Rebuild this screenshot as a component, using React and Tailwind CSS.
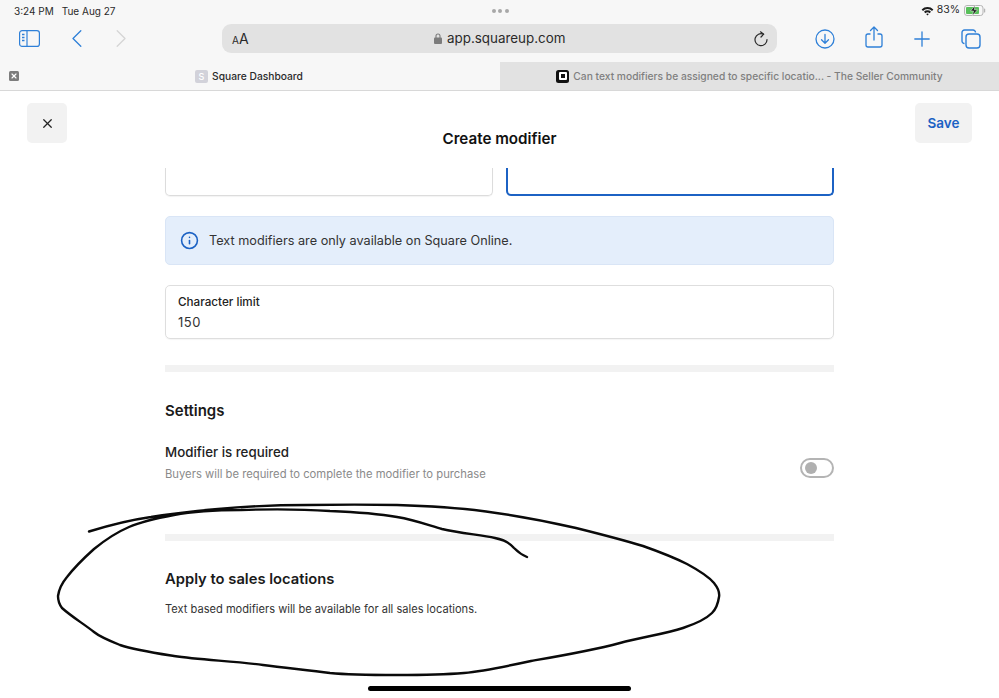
import { X, Info } from 'lucide-react';

const inkPath =
  'M89 531.5 C110 525 130 520 151 517 C175 513 195 511 218 509 C250 506 280 505 308 505 C340 504.5 370 504.5 397 505 C430 506 460 508 486 511.5 C520 516 550 522 576 528 C600 534 620 539 643 546 C660 552 675 558 687 564 C700 571 709 577 714 583 C718 588 720 592 719 597 C718 604 716 609 712 613 C705 620 695 624 683 628 C665 634 642 637 620 643 C590 651 560 656 531 661 C508 666 485 671 464 673 C440 675 420 675 397 675 C375 675 350 675 330 673 C308 670 285 668 263 665 C235 661 200 660 174 656 C155 653 135 650 120 645 C110 641 100 637 94 632 C84 624 72 617 62 608 C59 604 58 600 58 596 C59 589 62 583 67 577 C74 568 84 558 94 549 C105 540 115 533 129 527 C143 521 158 518 174 515 C195 511 218 510 241 510 C270 509 300 509 330 511 C355 512 380 514 397 517 C415 520 428 525 442 529 C460 533 480 535 495 538 C505 540 510 543 514 548 C518 552 522 555 527 557';

function StatusBar() {
  return (
    <div className="flex h-[20px] items-center justify-between pl-[14px] pr-[13px] pt-[1px] text-[10px] leading-none text-[#2a2a2a]">
      <div className="flex w-[200px] gap-[8px]">
        <span>3:24 PM</span>
        <span>Tue Aug 27</span>
      </div>
      <div className="flex gap-[2.5px]">
        <span className="h-[4px] w-[4px] rounded-full bg-[#a8a8a8]" />
        <span className="h-[4px] w-[4px] rounded-full bg-[#a8a8a8]" />
        <span className="h-[4px] w-[4px] rounded-full bg-[#a8a8a8]" />
      </div>
      <div className="flex w-[200px] items-center justify-end gap-[3px] text-[10.5px]">
        <svg width="13" height="10" viewBox="0 0 13 10" className="text-[#1c1c1c]">
          <path d="M0.6 3.4 A8.5 8.5 0 0 1 12.4 3.4 L11 4.9 A6.5 6.5 0 0 0 2 4.9 Z" fill="currentColor" />
          <path d="M3 5.8 A5 5 0 0 1 10 5.8 L8.6 7.2 A3 3 0 0 0 4.4 7.2 Z" fill="currentColor" />
          <path d="M5.2 8 A2 2 0 0 1 7.8 8 L6.5 9.6 Z" fill="currentColor" />
        </svg>
        <span>83%</span>
        <svg width="22" height="11" viewBox="0 0 22 11" className="ml-[1px]">
          <rect x="0.5" y="0.5" width="18.5" height="10" rx="2.5" fill="none" stroke="#b5b5b5" />
          <rect x="2" y="2" width="13" height="7" rx="1" fill="#58c05a" />
          <rect x="20" y="3.5" width="1.2" height="4" rx="0.6" fill="#b5b5b5" />
          <path d="M11 0.5 L6.5 6 H9.5 L8.5 10.5 L13.5 4.8 H10.4 Z" fill="#1c1c1c" stroke="#f7f7f7" strokeWidth="0.5" />
        </svg>
      </div>
    </div>
  );
}

function Toolbar() {
  return (
    <div className="mt-[4px] flex h-[29px] items-center text-[#2f80d8]">
      <div className="flex w-[222px] items-center pl-[19px]">
        <svg width="21" height="17" viewBox="0 0 21 17" fill="none" stroke="currentColor" strokeWidth="1.2">
          <rect x="0.6" y="0.6" width="19.8" height="15.8" rx="2.5" />
          <path d="M8 0.6 V16.4" />
          <path d="M3 4.5 H5.5 M3 7.5 H5.5 M3 10.5 H5.5" strokeWidth="1.4" />
        </svg>
        <svg width="10" height="17" viewBox="0 0 10 17" fill="none" stroke="currentColor" strokeWidth="1.3" strokeLinecap="round" strokeLinejoin="round" className="ml-[32px]">
          <path d="M8.8 0.8 L1 8.5 L8.8 16.2" />
        </svg>
        <svg width="10" height="17" viewBox="0 0 10 17" fill="none" stroke="#d5d5d5" strokeWidth="1.3" strokeLinecap="round" strokeLinejoin="round" className="ml-[34px]">
          <path d="M1.2 0.8 L9 8.5 L1.2 16.2" />
        </svg>
      </div>
      <div className="relative flex h-[29px] w-[555px] items-center justify-between rounded-[9px] bg-[#e2e2e2] pl-[10px] pr-[9px] text-[#2a2a2a]">
        <span className="flex items-baseline text-[14px] leading-none">
          <span className="text-[10px]">A</span>A
        </span>
        <span className="absolute left-[212px] flex items-center gap-[5px] text-[13.4px] leading-none">
          <svg width="8" height="11" viewBox="0 0 8 11" fill="none">
            <path d="M2 5 V3 A2 2 0 0 1 6 3 V5" stroke="#7c7c7c" strokeWidth="1.1" />
            <rect x="0" y="4.5" width="8" height="6.5" rx="1" fill="#7c7c7c" />
          </svg>
          app.squareup.com
        </span>
        <svg width="14" height="16" viewBox="0 0 14 16" fill="none" stroke="currentColor" strokeWidth="1.2">
          <path d="M9.5 3.2 A6 6 0 1 0 13 8.5" strokeLinecap="round" />
          <path d="M6.5 0.8 L9.7 3.2 L7 6" strokeLinecap="round" strokeLinejoin="round" />
        </svg>
      </div>
      <div className="flex flex-1 items-center pl-[38px]">
        <svg width="20" height="20" viewBox="0 0 20 20" fill="none" stroke="currentColor" strokeWidth="1.3">
          <circle cx="10" cy="10" r="9" />
          <path d="M10 5.5 V14 M6.5 10.7 L10 14.2 L13.5 10.7" strokeLinecap="round" strokeLinejoin="round" />
        </svg>
        <svg width="18" height="22" viewBox="0 0 18 22" fill="none" stroke="currentColor" strokeWidth="1.3" className="ml-[30px] -mt-[3px]">
          <path d="M5.5 8 H3 A2 2 0 0 0 1 10 V19 A2 2 0 0 0 3 21 H15 A2 2 0 0 0 17 19 V10 A2 2 0 0 0 15 8 H12.5" />
          <path d="M9 14 V1.2 M5.5 4.5 L9 1 L12.5 4.5" strokeLinecap="round" strokeLinejoin="round" />
        </svg>
        <svg width="16" height="16" viewBox="0 0 16 16" fill="none" stroke="currentColor" strokeWidth="1.3" strokeLinecap="round" className="ml-[31px]">
          <path d="M8 0.8 V15.2 M0.8 8 H15.2" />
        </svg>
        <svg width="20" height="20" viewBox="0 0 20 20" fill="none" stroke="currentColor" strokeWidth="1.4" className="ml-[31px]">
          <path d="M3.5 14.5 A2.5 2.5 0 0 1 1 12 V3.5 A2.5 2.5 0 0 1 3.5 1 H12 A2.5 2.5 0 0 1 14.5 3.5" />
          <rect x="5" y="5" width="14" height="14" rx="3" />
        </svg>
      </div>
    </div>
  );
}

function TabStrip() {
  return (
    <div className="mt-[9px] flex h-[29px] border-b border-[#d8d8d8] text-[10.25px] font-medium leading-none">
      <div className="relative flex w-[500px] items-center justify-center pr-[2px] text-[#2a2a2a]">
        <span className="absolute left-[9px] flex h-[10px] w-[10px] items-center justify-center rounded-[1.5px] bg-[#7d7d7d]">
          <X className="h-[8px] w-[8px] text-white" strokeWidth={3.5} />
        </span>
        <span className="mr-[4px] flex h-[13px] w-[13px] items-center justify-center rounded-[2px] bg-[#d2d2da] text-[9px] text-white">S</span>
        Square Dashboard
      </div>
      <div className="flex flex-1 items-center justify-center bg-[#e2e2e2] text-[#7f7f7f]">
        <span className="mr-[4px] flex h-[13px] w-[13px] items-center justify-center rounded-[2.5px] bg-[#111]">
          <span className="flex h-[8px] w-[8px] items-center justify-center rounded-[1px] bg-white">
            <span className="h-[4px] w-[4px] bg-[#111]" />
          </span>
        </span>
        Can text modifiers be assigned to specific locatio... - The Seller Community
      </div>
    </div>
  );
}

function ModalHeader() {
  return (
    <div className="flex h-[78px] items-start justify-between pl-[27px] pr-[27px] pt-[12px]">
      <button className="flex h-[40px] w-[40px] items-center justify-center rounded-[5px] bg-[#f2f2f2] text-[#222]">
        <X className="h-[15px] w-[15px]" strokeWidth={2} />
      </button>
      <h1 className="mt-[26px] pl-[17px] text-[15.2px] font-semibold leading-[20px] text-[#111]">Create modifier</h1>
      <button className="h-[40px] w-[57px] rounded-[5px] bg-[#f2f2f2] text-[13.5px] font-semibold text-[#1c62c4]">Save</button>
    </div>
  );
}

export default function App() {
  return (
    <div className="relative h-[698px] w-[999px] overflow-hidden bg-white font-['Inter',sans-serif]">
      <div className="h-[91px] bg-[#f7f7f7]">
        <StatusBar />
        <Toolbar />
        <TabStrip />
      </div>
      <ModalHeader />
      <main className="mx-auto w-[669px] -mt-[1px]">
        <div className="flex h-[28px] gap-[13px]">
          <div className="w-[328px] rounded-b-[5px] border-x border-b border-[#dcdcdc] shadow-[0_1px_1px_rgba(0,0,0,0.05)]" />
          <div className="flex-1 rounded-b-[5px] border-x-2 border-b-2 border-[#1c62c4]" />
        </div>
        <div className="mt-[20px] flex h-[49px] items-center gap-[10px] rounded-[5px] border border-[#d9e5f6] bg-[#e4eefb] pl-[14px] text-[12.7px] text-[#333]">
          <Info className="h-[19px] w-[19px] text-[#1c62c4]" strokeWidth={2} />
          <span className="pt-[1px]">Text modifiers are only available on Square Online.</span>
        </div>
        <div className="mt-[20px] h-[54px] rounded-[5px] border border-[#dedede] pl-[12px] pt-[9px] shadow-[0_1px_1px_rgba(0,0,0,0.04)]">
          <div className="text-[11.7px] font-medium leading-[15px] text-[#222]">Character limit</div>
          <div className="mt-[4px] text-[13px] leading-[16px] tracking-[0.5px] text-[#333]">150</div>
        </div>
        <div className="mt-[26px] h-[7px] bg-[#f2f2f2]" />
        <h2 className="mt-[29px] text-[15px] font-semibold leading-[20px] text-[#1a1a1a]">Settings</h2>
        <div className="mt-[23px] flex items-start justify-between">
          <div>
            <div className="text-[13.3px] font-medium leading-[17px] text-[#222]">Modifier is required</div>
            <div className="mt-[6px] text-[11.25px] leading-[15px] text-[#8a8a8a]">
              Buyers will be required to complete the modifier to purchase
            </div>
          </div>
          <div className="mt-[14px] flex h-[20px] w-[34px] items-center rounded-full border-2 border-[#b4b4b4] pl-[3px]">
            <span className="h-[12px] w-[12px] rounded-full bg-[#b0b0b0]" />
          </div>
        </div>
        <div className="mt-[52px] h-[7px] bg-[#f2f2f2]" />
        <h2 className="mt-[28px] text-[14.75px] font-semibold leading-[20px] text-[#1a1a1a]">Apply to sales locations</h2>
        <p className="mt-[13px] text-[11.1px] leading-[15px] text-[#333]">
          Text based modifiers will be available for all sales locations.
        </p>
      </main>
      <svg width="999" height="698" viewBox="0 0 999 698" className="pointer-events-none absolute left-0 top-0">
        <path d={inkPath} fill="none" stroke="#0a0a0a" strokeWidth="2.4" strokeLinecap="round" strokeLinejoin="round" />
      </svg>
      <div className="absolute bottom-[7px] left-[368px] h-[5px] w-[263px] rounded-full bg-black" />
    </div>
  );
}
